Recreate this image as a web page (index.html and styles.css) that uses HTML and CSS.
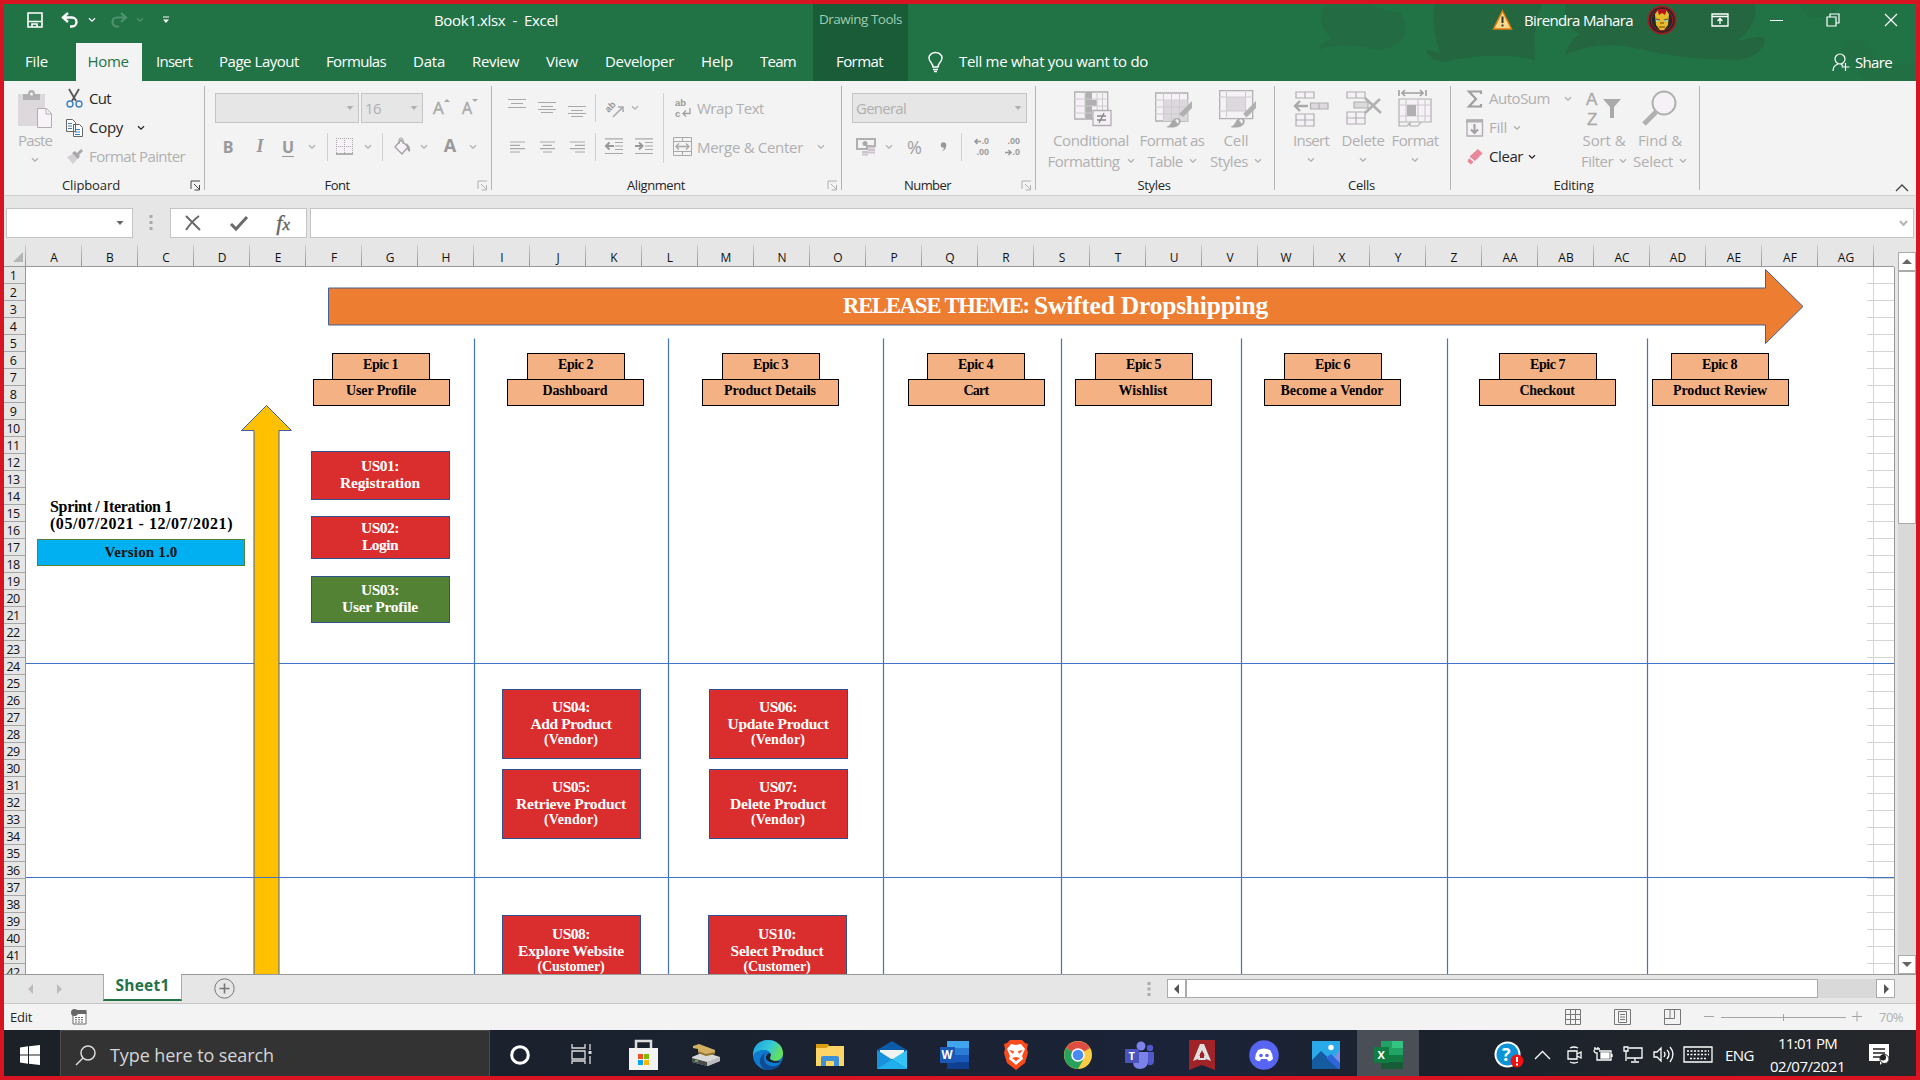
FILE: index.html
```html
<!DOCTYPE html>
<html lang="en">
<head>
<meta charset="utf-8">
<title>Book1.xlsx - Excel</title>
<link rel="stylesheet" href="styles.css">
</head>
<body>
<svg width="0" height="0" class="defs">
  <defs>
    <symbol id="chev" viewBox="0 0 8 6"><path d="M1 1.200l3 3 3-3" fill="none" stroke="currentColor" stroke-width="1.300"/></symbol>
    <symbol id="tri" viewBox="0 0 8 6"><path d="M.5 1h7L4 5z" fill="currentColor"/></symbol>
    <symbol id="launch" viewBox="0 0 11 11"><path d="M1 9V1h9M4 4l5 5M9.500 5v5h-5" fill="none" stroke="currentColor"/></symbol>
    <symbol id="brush" viewBox="0 0 28 28"><path d="M27 1v7l-9 9-4-3z" fill="#b0b0b0"/><path d="M1 27c6-1 5-9 11-9 4 0 5 4 2 7s-8 3-13 2z" fill="#a9a9a9"/><path d="M10 20c3-2 5 1 3 4z" fill="#f3f3f3"/></symbol>
  </defs>
</svg>
<div class="screen">
  <header class="head">
    <svg class="art" width="640" height="77" viewBox="1276 4 640 77"><g fill="#24663f"><path d="M1325 4h43q20 8 32 8 8 12 4 24-5 10-25 14-30-7-54-3l-6 4 2-7q8-2 10-6-16-14-6-34z" opacity=".6"/><path d="M1434 4h108q-9 20-7 56-40-10-92 2-15-3-17-13 8 3 14 4-8-25-6-49z"/><path d="M1565 4h190q4 20-18 37l20-4q8-1 8 4-4 16-28 19-60-1-97-11-40-10-75 6 4-14 14-21-16-10-14-30z"/><path d="M1842 50q0-14 18-10l25 24q20 4 31-4v21h-50z" opacity=".3"/><path d="M1800 4h40q-5 14-26 14-12-3-14-14z" opacity=".4"/></g></svg>
    <div class="titlerow">
      <svg class="g23" width="16" height="16" viewBox="0 0 16 16" fill="none" stroke="#fff" stroke-width="1.600"><path d="M1 1h14v14H1zM1 9.500h14M5 15v-3h5v3"/></svg>
      <svg class="g18" width="19" height="16" viewBox="0 0 19 16" fill="none" stroke="#fff" stroke-width="2.400"><path d="M7 1L2 5.500 7 10M2 5.500h9a4.500 4.500 0 0 1 0 9H9"/></svg>
      <svg class="g8 w" width="8" height="6"><use href="#chev"/></svg>
      <svg class="g13" width="19" height="16" viewBox="0 0 19 16" fill="none" stroke="#4f9270" stroke-width="2.200"><path d="M12 1l5 4.500L12 10M17 5.500H8a4.500 4.500 0 0 0 0 9h2"/></svg>
      <svg class="g8 dim" width="8" height="6"><use href="#chev"/></svg>
      <svg class="g18" width="8" height="8" viewBox="0 0 8 8"><path d="M1 1h6" stroke="#fff"/><path d="M1 3.500h6L4 7z" fill="#fff"/></svg>
      <div class="doc"><span data-w="124">Book1.xlsx &nbsp;-&nbsp; Excel</span></div>
      <div class="ctx"><span data-w="83">Drawing Tools</span></div>
      <div class="user">
        <svg width="19" height="20" viewBox="0 0 19 20"><path d="M9.500 1L18.500 19H.5z" fill="#fbd98a" stroke="#e07a10" stroke-width="1.500"/><path d="M9.500 6.500v6.500M9.500 14.500v2" stroke="#333" stroke-width="2"/></svg>
        <span class="g12" data-w="109">Birendra Mahara</span>
        <svg class="g14" width="30" height="30" viewBox="0 0 30 30"><circle cx="15" cy="15" r="14.500" fill="#a01c22"/><circle cx="15" cy="15" r="12.800" fill="#262626"/><circle cx="15" cy="15" r="10.800" fill="none" stroke="#a01c22"/><path d="M8 9l3-4h8l3 4-1 11-4 5h-4l-4-5z" fill="#e5bb2a"/><path d="M10 4h10l-2 6-3-2-3 2z" fill="#b4141c"/><path d="M9 15.500h4m4 0h4" stroke="#7fe3f5" stroke-width="1.500"/><path d="M13 18h4M9 14l4 1m8-1l-4 1M12 22h6" stroke="#7a3a10"/></svg>
        <svg class="g34" width="18" height="14" viewBox="0 0 18 14" fill="none" stroke="#fff" stroke-width="1.300"><path d="M1 1h16v12H1zM1 3.500h16M9 11V6M6.500 8L9 5.500 11.500 8"/></svg>
        <svg class="g41" width="14" height="14"><path d="M0 7.500h13" stroke="#fff"/></svg>
        <svg class="g42" width="14" height="14" viewBox="0 0 14 14" fill="none" stroke="#fff" stroke-width="1.200"><path d="M1 4h9v9H1zM4 4V1h9v9h-3"/></svg>
        <svg class="g44" width="14" height="14" viewBox="0 0 14 14" fill="none" stroke="#fff" stroke-width="1.200"><path d="M1 1l12 12M13 1L1 13"/></svg>
      </div>
    </div>
    <nav class="tabs">
      <span class="tab file"><b data-w="23">File</b></span><span class="tab active"><b data-w="41">Home</b></span>
      <span class="tab g14"><b data-w="36">Insert</b></span><span class="tab g27"><b data-w="80">Page Layout</b></span><span class="tab g27"><b data-w="60">Formulas</b></span><span class="tab g27"><b data-w="32">Data</b></span><span class="tab g27"><b data-w="47">Review</b></span><span class="tab g27"><b data-w="32">View</b></span><span class="tab g27"><b data-w="69">Developer</b></span><span class="tab g27"><b data-w="32">Help</b></span><span class="tab g27"><b data-w="36">Team</b></span>
      <span class="tab ctxtab"><b data-w="47">Format</b></span>
      <svg class="g20" width="15" height="20" viewBox="0 0 15 20" fill="none" stroke="#fff" stroke-width="1.400"><path d="M5 15c0-4-4-5-4-9a6.500 5.500 0 0 1 13 0c0 4-4 5-4 9zM5 17.500h5M6 19.500h3"/></svg>
      <span class="tab g16"><b data-w="189">Tell me what you want to do</b></span>
      <div class="share"><svg width="18" height="19" viewBox="0 0 18 19" fill="none" stroke="#fff" stroke-width="1.200"><circle cx="8" cy="6" r="5"/><path d="M1 18c0-4 2-6 5-7M9 11l2 2M13.500 10v8M9.500 14h8"/></svg><b class="g5" data-w="37">Share</b></div>
    </nav>
  </header>

  <section class="ribbon">
    <div class="group clip">
      <div class="body">
        <div class="big paste"><div class="ic"><svg width="34" height="38" viewBox="0 0 34 38"><path d="M0 4h27v32H0z" fill="#ddd8dc"/><path d="M5 10V4h5a3.500 4 0 0 1 7 0h5v6z" fill="#b0b0b0"/><circle cx="13.500" cy="4" r="1.500" fill="#f3f3f3"/><path d="M19.500 18.500h9l5 5v14h-14z" fill="#f7f3f8" stroke="#b0b0b0"/><path d="M28 18.500v5.500h5.500" fill="none" stroke="#b0b0b0"/></svg></div><span data-w="34">Paste</span><svg width="8" height="6"><use href="#chev"/></svg></div>
        <div class="list">
          <div class="on"><svg width="17" height="19" viewBox="0 0 17 19" fill="none"><path d="M3 0l7 12M13 0L6 12" stroke="#555" stroke-width="1.800"/><circle cx="4" cy="15" r="3" stroke="#3f7fbf" stroke-width="1.400"/><circle cx="13" cy="15" r="3" stroke="#3f7fbf" stroke-width="1.400"/></svg><span class="g6" data-w="22">Cut</span></div>
          <div class="on"><svg width="17" height="18" viewBox="0 0 17 18" fill="#fff" stroke="#666"><path d="M.5.500h6l3 3v9h-9zM7.500 5.500h6l3 3v9h-9z"/><path d="M2 4.500h4M2 7h4M2 9.500h4M9 10.500h5M9 13h5M9 15.500h5" stroke="#3f7fbf"/></svg><span class="g6" data-w="34">Copy</span><svg class="g14" width="8" height="6"><use href="#chev"/></svg></div>
          <div><svg width="17" height="15" viewBox="0 0 17 15"><path d="M1 8l6-3 5 4-5 6z" fill="#d5d0d5"/><path d="M6 4l3-2 5 5-2 3zM11 4l4-4 2 2-4 4z" fill="#a9a9a9"/></svg><span class="g6" data-w="96">Format Painter</span></div>
        </div>
      </div>
      <div class="label"><span data-w="58">Clipboard</span><svg class="on launch" width="11" height="11"><use href="#launch"/></svg></div>
    </div>
    <i class="sep"></i>
    <div class="group font">
      <div class="rows">
        <div class="row"><div class="combo g10 fam"><svg width="8" height="6"><use href="#tri"/></svg></div><div class="combo g2 size"><span data-w="16">16</span><svg width="8" height="6"><use href="#tri"/></svg></div><span class="aa g10">A<svg width="6" height="5" viewBox="0 0 6 5"><path d="M0 4l3-3 3 3z" fill="#a9a9a9"/></svg></span><span class="aa small g14">A<svg width="6" height="5" viewBox="0 0 6 5"><path d="M0 1l3 3 3-3z" fill="#a9a9a9"/></svg></span></div>
        <div class="row"><span class="f b g16">B</span><span class="f i g18">I</span><span class="f u g14">U</span><svg class="g13" width="8" height="6"><use href="#chev"/></svg><i class="ms g11"></i>
          <svg class="g8" width="17" height="17" viewBox="0 0 17 17"><path d="M0 0h17v17H0z" fill="#f7f1f8"/><path d="M.5 0v16M8.500 0v16M16.500 0v16M0 .5h17M0 8.500h17" stroke="#a9a9a9" stroke-dasharray="1 1"/><path d="M0 16h17" stroke="#999" stroke-width="1.500"/></svg><svg class="g11" width="8" height="6"><use href="#chev"/></svg><i class="ms g10"></i>
          <svg class="g11" width="18" height="17" viewBox="0 0 18 17"><path d="M7 2l7 7-6 7-7-7z" fill="#f7f1f8" stroke="#a0a0a0" stroke-width="1.300"/><path d="M5 6V2a2 2 0 0 1 4 0v4" fill="none" stroke="#a0a0a0"/><path d="M12 5q5 3 4 9-3-1-3-5z" fill="#a0a0a0"/></svg><svg class="g8" width="8" height="6"><use href="#chev"/></svg>
          <span class="f b big-a g15">A</span><svg class="g12" width="8" height="6"><use href="#chev"/></svg></div>
      </div>
      <div class="label"><span data-w="25">Font</span><svg class="launch" width="11" height="11"><use href="#launch"/></svg></div>
    </div>
    <i class="sep"></i>
    <div class="group align">
      <div class="body">
        <div class="rows alrows">
          <div class="row"><svg class="g16" width="18" height="20"><path d="M0 1.500h18M3 5.500h12M0 9.500h18" stroke="#a9a9a9" stroke-width="1.200"/></svg><svg class="g12" width="18" height="20"><path d="M0 4.500h18M3 8.500h12M0 11.500h18M3 14.500h12" stroke="#a9a9a9" stroke-width="1.200"/></svg><svg class="g12" width="18" height="20"><path d="M0 8.500h18M3 12.500h12M0 15.500h18M3 18.500h12" stroke="#a9a9a9" stroke-width="1.200"/></svg><i class="ms g9"></i>
            <svg class="g9" width="20" height="20" viewBox="0 0 20 20"><text class="tiny" x="1" y="11" transform="rotate(-45 7 10)">ab</text><path d="M8 19L18 9M18 14V9h-5" fill="none" stroke="#a9a9a9" stroke-width="1.500"/></svg><svg class="g6" width="8" height="6"><use href="#chev"/></svg></div>
          <div class="row"><svg class="g18" width="15" height="12"><path d="M0 1h15M0 4.300h10M0 7.600h15M0 11h10" stroke="#a9a9a9" stroke-width="1.200"/></svg><svg class="g15" width="15" height="12"><path d="M0 1h15M3 4.300h9M0 7.600h15M3 11h9" stroke="#a9a9a9" stroke-width="1.200"/></svg><svg class="g15" width="15" height="12"><path d="M0 1h15M5 4.300h10M0 7.600h15M5 11h10" stroke="#a9a9a9" stroke-width="1.200"/></svg><i class="ms g10"></i>
            <svg class="g9" width="18" height="17" fill="none"><path d="M0 .8h18M10 4.500h8M10 8h8M10 11.500h8M0 15.500h18" stroke="#a9a9a9" stroke-width="1.200"/><path d="M1 8h8M4.500 4.500L1 8l3.500 3.500" stroke="#999" stroke-width="2"/></svg>
            <svg class="g12" width="18" height="17" fill="none"><path d="M0 .8h18M10 4.500h8M10 8h8M10 11.500h8M0 15.500h18" stroke="#a9a9a9" stroke-width="1.200"/><path d="M0 8h7M4 4.500L7.500 8 4 11.500" stroke="#999" stroke-width="2"/></svg></div>
        </div>
        <i class="ms tall"></i>
        <div class="rows">
          <div class="row"><svg class="g11" width="16" height="22" viewBox="0 0 16 22"><text class="tiny" x="0" y="9">ab</text><text class="tiny" x="0" y="20">c</text><path d="M15 11v5.500H8M11 13.500l-3 3 3 3" fill="none" stroke="#a0a0a0" stroke-width="1.300"/></svg><span class="g6" data-w="67">Wrap Text</span></div>
          <div class="row"><svg class="g9" width="19" height="19" viewBox="0 0 19 19" fill="none" stroke="#a9a9a9"><path d="M.5.500h18v18H.5zM.5 4.500h18M.5 14.500h18M9.500 0v4M9.500 15v4"/><path d="M3 9.500h13M6 6.500l-3 3 3 3M13 6.500l3 3-3 3" stroke-width="1.400"/></svg><span class="g5" data-w="106">Merge &amp; Center</span><svg class="g14" width="8" height="6"><use href="#chev"/></svg></div>
        </div>
      </div>
      <div class="label shift"><span data-w="58">Alignment</span><svg class="launch" width="11" height="11"><use href="#launch"/></svg></div>
    </div>
    <i class="sep"></i>
    <div class="group number">
      <div class="rows">
        <div class="row"><div class="combo g10 gen"><span data-w="50">General</span><svg width="8" height="6"><use href="#tri"/></svg></div></div>
        <div class="row"><svg class="g14" width="20" height="20" viewBox="0 0 20 20"><path d="M1 2h18v7H11v3H1z" fill="none" stroke="#b0b0b0" stroke-width="2"/><circle cx="9" cy="6.500" r="2.500" fill="#a9a9a9"/><path d="M12 10.500h7M12 13h7M12 15.500h7M6 15h6M6 17.500h6" stroke="#ccc4cc" stroke-width="1.800"/></svg><svg class="g9" width="8" height="6"><use href="#chev"/></svg><span class="pct g14">%</span><svg class="g16" width="9" height="12" viewBox="0 0 9 12"><circle cx="4.500" cy="4" r="2.700" fill="#999"/><path d="M7.200 4q0 5-4.500 6.500 3-2.500 2-5z" fill="#999"/></svg><i class="ms g13"></i>
          <span class="dec g10"><span><svg width="7" height="7" viewBox="0 0 7 7"><path d="M7 3.500H1M3.500 1L1 3.500 3.500 6" fill="none" stroke="#999" stroke-width="1.600"/></svg>.0</span><span>.00</span></span><span class="dec g14"><span>.00</span><span><svg width="7" height="7" viewBox="0 0 7 7"><path d="M0 3.500h6M3.500 1L6 3.500 3.500 6" fill="none" stroke="#999" stroke-width="1.600"/></svg>.0</span></span></div>
      </div>
      <div class="label"><span data-w="47">Number</span><svg class="launch" width="11" height="11"><use href="#launch"/></svg></div>
    </div>
    <i class="sep"></i>
    <div class="group styles">
      <div class="body">
        <div class="big cond"><div class="ic"><svg width="38" height="36" viewBox="0 0 38 36"><path d="M.7 2h33v27H.7z" fill="#f6f1f7" stroke="#b0b0b0" stroke-width="1.300"/><path d="M11 2h7v27h-7zM11 10h12v6H11z" fill="#b0b0b0"/><path d="M0 9h34M0 16h34M0 23h34M11 2v27M23 2v27M28.500 2v27" stroke="#ccc"/><path d="M19 20.500h18v15H19z" fill="#f6f1f7" stroke="#b0b0b0" stroke-width="1.300"/><path d="M23 26h9M23 30h9M30 23l-5 10" stroke="#888" stroke-width="1.400"/></svg></div><span data-w="76">Conditional</span><span><b data-w="72">Formatting</b><svg class="g7" width="8" height="6"><use href="#chev"/></svg></span></div>
        <div class="big fmt"><div class="ic"><svg width="38" height="38" viewBox="0 0 38 38"><path d="M.7 3h32v28H.7z" fill="#f6f1f7" stroke="#b0b0b0" stroke-width="1.300"/><path d="M8.500 10.500h24V31h-24z" fill="#ddd8dd"/><path d="M0 10h33M0 17h33M0 24h33M8.500 3v28M16.500 3v28M24.500 3v28" stroke="#ccc"/><use href="#brush" x="10" y="10" width="28" height="28"/></svg></div><span data-w="65">Format as</span><span><b data-w="35">Table</b><svg class="g6" width="8" height="6"><use href="#chev"/></svg></span></div>
        <div class="big cell"><div class="ic"><svg width="38" height="38" viewBox="0 0 38 38"><path d="M.7.700h33v28H.7z" fill="#f6f1f7" stroke="#b0b0b0" stroke-width="1.300"/><path d="M8 7h19v14H8z" fill="#ddd8dd"/><path d="M0 7h34M0 21h34M7.500 0v29M26.500 0v29" stroke="#ccc"/><use href="#brush" x="10" y="10" width="28" height="28"/></svg></div><span data-w="25">Cell</span><span><b data-w="38">Styles</b><svg class="g6" width="8" height="6"><use href="#chev"/></svg></span></div>
      </div>
      <div class="label"><span data-w="33">Styles</span></div>
    </div>
    <i class="sep"></i>
    <div class="group cells">
      <div class="body">
        <div class="big"><div class="ic"><svg width="36" height="36" viewBox="0 0 36 36" fill="#f6f1f7" stroke="#b0b0b0" stroke-width="1.200"><path d="M3 2h18v6H3zM12 2v6M3 24h18v12H3zM12 24v12M3 30h18"/><path d="M17.500 13h17.500v6H17.500zM26 13v6" fill="#ddd8dd"/><path d="M15 16H2M7 11l-5 5 5 5" fill="none" stroke="#a9a9a9" stroke-width="2.400"/></svg></div><span data-w="36">Insert</span><svg width="8" height="6"><use href="#chev"/></svg></div>
        <div class="big"><div class="ic"><svg width="36" height="36" viewBox="0 0 36 36" fill="#f6f1f7" stroke="#b0b0b0" stroke-width="1.200"><path d="M2 2h18v6H2zM11 2v6M2 22h18v12H2zM11 22v12M2 28h18"/><path d="M9 12h14v6H9z" fill="#ddd8dd"/><path d="M20 8l16 15M35 9L20 23" fill="none" stroke="#b0b0b0" stroke-width="2.600"/></svg></div><span data-w="43">Delete</span><svg width="8" height="6"><use href="#chev"/></svg></div>
        <div class="big"><div class="ic"><svg width="34" height="38" viewBox="0 0 34 38" fill="#f6f1f7" stroke="#b0b0b0" stroke-width="1.200"><path d="M1 0v6M28 0v6M4 3h21M7 0L4 3l3 3M22 0l3 3-3 3" fill="none" stroke="#a0a0a0" stroke-width="1.600"/><path d="M1 9h32v23H1z"/><path d="M1 15h32M1 26h32M8 9v23M20 9v23M27 9v23" stroke="#ccc"/><path d="M9 15h9v11H9z" fill="#b0b0b0" stroke="none"/><path d="M1 32v4h8l3-3v3h8l3-4" fill="none"/></svg></div><span data-w="47">Format</span><svg width="8" height="6"><use href="#chev"/></svg></div>
      </div>
      <div class="label"><span data-w="27">Cells</span></div>
    </div>
    <i class="sep"></i>
    <div class="group edit">
      <div class="body">
        <div class="list">
          <div><svg width="18" height="18" viewBox="0 0 18 18"><path d="M15 4V1.500H3L10 9l-7 7.500h12V14" fill="none" stroke="#a0a0a0" stroke-width="2.200"/></svg><span class="g5" data-w="61">AutoSum</span><svg class="g14" width="8" height="6"><use href="#chev"/></svg></div>
          <div><svg width="18" height="18" viewBox="0 0 18 18"><path d="M1 1h15.500v16H1z" fill="#f6f1f7" stroke="#b0b0b0" stroke-width="1.400"/><path d="M0 2h17" stroke="#b0b0b0" stroke-width="3"/><path d="M8.500 5v9M5 10.500L8.500 14l3.500-3.500" fill="none" stroke="#a0a0a0" stroke-width="2"/></svg><span class="g5" data-w="18">Fill</span><svg class="g6" width="8" height="6"><use href="#chev"/></svg></div>
          <div class="on"><svg width="18" height="18" viewBox="0 0 18 18"><path d="M12 1.500l4 4-7 7-5-4z" fill="#e8869a" stroke="#e8869a" stroke-linejoin="round"/><path d="M3 10l4.500 4-2.500 2.500-3.500-3z" fill="#e8869a"/></svg><span class="g5" data-w="34">Clear</span><svg class="g5" width="8" height="6"><use href="#chev"/></svg></div>
        </div>
        <div class="big"><div class="ic"><svg width="36" height="38" viewBox="0 0 36 38"><text class="az" x="0" y="15">A</text><text class="az" x="1" y="35">Z</text><path d="M17 9h18l-7 8v11h-4V17z" fill="#a9a9a9"/></svg></div><span data-w="43">Sort &amp;</span><span><b data-w="32">Filter</b><svg class="g6" width="8" height="6"><use href="#chev"/></svg></span></div>
        <div class="big"><div class="ic"><svg width="36" height="36" viewBox="0 0 36 36"><path d="M2 34l12-12" stroke="#b0b0b0" stroke-width="5"/><circle cx="22" cy="13" r="11.500" fill="#f6f1f7" stroke="#b0b0b0" stroke-width="2"/></svg></div><span data-w="44">Find &amp;</span><span><b data-w="40">Select</b><svg class="g6" width="8" height="6"><use href="#chev"/></svg></span></div>
      </div>
      <div class="label"><span data-w="40">Editing</span></div>
    </div>
    <i class="sep"></i>
    <svg class="collapse" width="14" height="9" viewBox="0 0 14 9"><path d="M1 8l6-6 6 6" fill="none" stroke="#444" stroke-width="1.300"/></svg>
  </section>

  <section class="fbar">
    <div class="namebox"><svg width="8" height="6"><use href="#tri"/></svg></div>
    <svg class="dots" width="4" height="18"><path d="M2 1v3M2 7v3M2 13v3" stroke="#aaa" stroke-width="3"/></svg>
    <div class="fbtns">
      <svg width="16" height="16" viewBox="0 0 16 16"><path d="M1 1l14 14M14 1Q7 6 1 15" stroke="#6a6a6a" stroke-width="2" fill="none"/></svg>
      <svg width="18" height="15" viewBox="0 0 18 15"><path d="M1 8l5 5L17 1" stroke="#6a6a6a" stroke-width="3" fill="none"/></svg>
      <span class="fx">f<small>x</small></span>
    </div>
    <div class="finput"><svg width="9" height="7" viewBox="0 0 9 7"><path d="M1 1l3.500 4L8 1" fill="none" stroke="#b5b5b5" stroke-width="2"/></svg></div>
  </section>

  <section class="sheet">
    <div class="colheads" id="cols"><span class="corner"><svg width="10" height="10"><path d="M10 0v10H0z" fill="#b5b5b5"/></svg></span></div>
    <div class="gridrow">
      <div class="rowheads" id="rows"></div>
      <div class="canvas" id="canvas">
        <svg width="1868" height="707" viewBox="26 267 1868 707" id="lines"></svg>
      </div>
    </div>
    <div class="vscroll"><span class="btn"><svg width="10" height="7"><path d="M0 6h10L5 1z" fill="#666"/></svg></span><span class="thumb"></span><span class="track"></span><span class="btn"><svg width="10" height="7"><path d="M0 1h10L5 6z" fill="#666"/></svg></span></div>
  </section>

  <section class="sheetbar">
    <svg class="g24" width="5" height="10"><path d="M5 0v10L0 5z" fill="#bcbcbc"/></svg>
    <svg class="g24" width="5" height="10"><path d="M0 0v10l5-5z" fill="#bcbcbc"/></svg>
    <div class="stab"><span data-w="54">Sheet1</span></div>
    <svg class="g32" width="21" height="21" viewBox="0 0 21 21" fill="none" stroke="#777"><circle cx="10.500" cy="10.500" r="9.700"/><path d="M10.500 5.500v10M5.500 10.500h10" stroke-width="1.600"/></svg>
    <div class="hs"><svg width="4" height="16"><path d="M2 1v3M2 6.500v3M2 12v3" stroke="#aaa" stroke-width="3"/></svg>
      <div class="hscroll"><span class="btn"><svg width="6" height="10"><path d="M5 0v10L0 5z" fill="#555"/></svg></span><span class="hthumb"></span><span class="htrack"></span><span class="btn"><svg width="6" height="10"><path d="M1 0v10l5-5z" fill="#555"/></svg></span></div>
    </div>
  </section>
  <section class="status">
    <span class="g6" data-w="22">Edit</span>
    <svg class="g39" width="16" height="16" viewBox="0 0 16 16"><path d="M2 3h13v12H2z" fill="#fff" stroke="#666"/><path d="M5 1h10.500v4H5z" fill="#666"/><circle cx="3.500" cy="3.500" r="3.500" fill="#666"/><path d="M4 8.500h9M4 10.800h9M4 13h9" stroke="#666" stroke-dasharray="2 1"/></svg>
    <div class="views">
      <svg width="17" height="16" fill="none" stroke="#777"><path d="M.5.500h15v15H.5zM.5 5.500h15M.5 10.500h15M5.500 0v16M10.500 0v16"/></svg>
      <svg class="g32" width="17" height="16" fill="none" stroke="#777"><path d="M.5.500h16v15H.5zM4.500 2.500h8v11h-8zM6 5.500h5M6 8h5M6 10.500h5"/></svg>
      <svg class="g33" width="17" height="16" fill="none" stroke="#777"><path d="M.5.500h16v15H.5zM.5 9.500h10V.5M6 .5v9"/></svg>
      <svg class="g23" width="160" height="16" fill="none" stroke="#a5a5a5"><path d="M0 7.500h10M17 8.500h125M79.500 5v7M148 7.500h10M153 2.500v10"/></svg>
      <span class="g15 pc" data-w="24">70%</span>
    </div>
  </section>

  <footer class="taskbar">
    <div class="start"><svg width="20" height="20" fill="#fff"><path d="M0 2.500l8-1.200v8.200H0zM9 1.200L20 0v9.500H9zM0 10.500h8v8.200l-8-1.200zM9 10.500h11V20L9 18.800z"/></svg></div>
    <div class="search"><svg width="21" height="21" fill="none" stroke="#ddd" stroke-width="1.500"><circle cx="13" cy="8" r="7"/><path d="M8 13l-7 7"/></svg><span class="g14" data-w="164">Type here to search</span></div>
    <div class="apps">
      <span><svg width="20" height="20"><circle cx="10" cy="10" r="8.300" fill="none" stroke="#fff" stroke-width="3"/></svg></span>
      <span><svg width="22" height="21" fill="none" stroke="#ddd" stroke-width="1.300"><path d="M1 0v4h13V0M1 7h13v8H1zM1 20v-3h13v3M19 0v6M19 12v8"/><path d="M19 7v3" stroke-width="3"/></svg></span>
      <span><svg width="30" height="30"><path d="M7 10V1h15v9" fill="none" stroke="#ddd" stroke-width="2.500"/><path d="M0 8h29v22H0z" fill="#f3f3f3"/><path d="M9 14h5v5H9z" fill="#f25022"/><path d="M15 14h5v5h-5z" fill="#7fba00"/><path d="M9 20h5v5H9z" fill="#00a4ef"/><path d="M15 20h5v5h-5z" fill="#ffb900"/></svg></span>
      <span><svg width="28" height="22" viewBox="0 0 28 22"><path d="M0 13l12-5 16 5v4l-12 5L0 18z" fill="#d8d8d8"/><path d="M0 14l15 4v4L0 18z" fill="#4b4b4b"/><path d="M15 18l13-5v4l-13 5z" fill="#bbb"/><path d="M1 2l6-2 16 6v4l-9 2-8-3V5L1 4z" fill="#d2b062"/><path d="M6 7l8 3 9-2v2l-9 2-8-3z" fill="#927535"/><path d="M3 17h3" stroke="#4fd05a" stroke-width="1.500"/></svg></span>
      <span><svg width="30" height="30" viewBox="0 0 30 30"><defs><linearGradient id="eg" x1="0" x2="1" y1="0" y2=".4"><stop stop-color="#199fe0"/><stop offset=".6" stop-color="#35c8d8"/><stop offset="1" stop-color="#65e15a"/></linearGradient></defs><circle cx="15" cy="15" r="15" fill="#0f7bd0"/><path d="M0 13C1 5 7 0 15 0c9 0 15 6 15 13 0 6-5 8-9 8s-5-2-4-4 1-7-6-7C5 10 1 12 0 17z" fill="url(#eg)"/><path d="M11 16c-1 9 8 14 17 7-3 6-9 7-13 7C8 30 5 22 8 17s7-5 9-4c-4-1-6 1-6 3z" fill="#104b95"/><path d="M17 13c2 2 0 4 0 5s2 4 12 3c-6 4-18 1-16-5 1-2 3-3 4-3z" fill="#1b2232"/></svg></span>
      <span><svg width="28" height="24"><path d="M0 1h12l2 3h14v19H0z" fill="#dd9c10"/><path d="M0 5h10l3-2h15v20H0z" fill="#fcd566"/><path d="M5 23v-8q0-2 2-2h14q2 0 2 2v8h-5v-5h-8v5z" fill="#3c91d6"/></svg></span>
      <span><svg width="30" height="28"><path d="M0 9L15 0l15 9v10H0z" fill="#0a5ba8"/><path d="M3 9h24v9H3z" fill="#f2f2f2"/><path d="M0 9l30 19H0z" fill="#1792dc"/><path d="M30 9v19L15 18.500z" fill="#33c4f5"/><path d="M0 28l15-9.500L30 28z" fill="#22aeea"/></svg></span>
      <span><svg width="29" height="28"><path d="M7 0h22v7H7z" fill="#41a5ee"/><path d="M7 7h22v7H7z" fill="#2b7cd3"/><path d="M7 14h22v7H7z" fill="#185abd"/><path d="M7 21h22v7H7z" fill="#103f91"/><path d="M0 6h15v16H0z" fill="#1b57b5"/><text x="1.500" y="18" font-size="11.500" font-weight="bold" fill="#fff">W</text></svg></span>
      <span><svg width="26" height="30"><path d="M7 0h12l3 3 3 1-1 5 1 4-3 10-9 7-9-7L1 13l1-4-1-5 3-1z" fill="#fb4a1c"/><path d="M8 4l5 1 5-1 4 5-3 7 1 3-7 6-7-6 1-3-3-7z" fill="#fff"/><path d="M6 10l5 1-1 3zM20 10l-5 1 1 3zM9 18l4-1 4 1-4 3z" fill="#fb4a1c"/></svg></span>
      <span><svg width="28" height="28" viewBox="0 0 28 28"><circle cx="14" cy="14" r="14" fill="#fccc44"/><path d="M14 14L2 7a14 14 0 0 1 24 0z" fill="#dc4e41"/><path d="M2 7a14 14 0 0 0 12 21l6-10.500-6-3.500z" fill="#26a25d"/><circle cx="14" cy="14" r="6.800" fill="#fff"/><circle cx="14" cy="14" r="5.300" fill="#4a8af4"/></svg></span>
      <span><svg width="30" height="28"><circle cx="16" cy="5" r="4.500" fill="#7b83eb"/><circle cx="25" cy="7" r="3.200" fill="#5059c9"/><path d="M20 11h9v9q0 5-6 4z" fill="#5059c9"/><path d="M9 11h14v10q-1 7-8 7t-7-7z" fill="#7b83eb"/><path d="M0 8h14v14H0z" fill="#4b53bc"/><text x="3.500" y="19" font-size="11" font-weight="bold" fill="#fff">T</text></svg></span>
      <span><svg width="26" height="30"><path d="M0 0h26v30l-13-5-13 5z" fill="#a02328"/><path d="M11 4h4l7 17-5-2-4-9-4 9-5 2zM10 16h6l1 4h-8z" fill="#e0e0e0"/><path d="M11 13h4v5h-4z" fill="#a02328"/></svg></span>
      <span><svg width="30" height="30"><circle cx="15" cy="15" r="14.800" fill="#5865f2"/><path d="M9 10q6-3 12 0 3 4 3 9-3 3-5 2l-1-2h-6l-1 2q-2 1-5-2 0-5 3-9z" fill="#fff"/><circle cx="12" cy="15.500" r="1.800" fill="#5865f2"/><circle cx="18" cy="15.500" r="1.800" fill="#5865f2"/></svg></span>
      <span><svg width="28" height="28"><path d="M0 0h28v28H0z" fill="#2aa9e8"/><path d="M28 8v20H14z" fill="#7e8fe0"/><circle cx="19" cy="6.500" r="2.700" fill="#fff"/><path d="M0 19l9-9 19 18H0z" fill="#155b9f"/><path d="M14 17l5-4 9 9v6h-2z" fill="#2c66d8"/></svg></span>
      <span class="cur"><svg width="29" height="28"><path d="M7 0h22v28H7z" fill="#21a366"/><path d="M18 0h11v7H18z" fill="#33c481"/><path d="M7 14h11v7H7z" fill="#107c41"/><path d="M18 14h11v7H18z" fill="#107c41"/><path d="M7 21h22v7H7z" fill="#185c37"/><path d="M0 6h15v16H0z" fill="#107c41"/><text x="3.500" y="18" font-size="11" font-weight="bold" fill="#fff">X</text></svg></span>
    </div>
    <div class="tray">
      <svg width="30" height="28"><circle cx="13.500" cy="13.500" r="13" fill="#fff"/><circle cx="13.500" cy="13.500" r="11" fill="#0c93d8"/><text x="8" y="20" font-size="18" font-weight="bold" fill="#fff">?</text><circle cx="23" cy="20" r="6.500" fill="#f01010"/><path d="M23 16v5M23 22.500v2" stroke="#fff" stroke-width="2"/></svg>
      <svg class="g10" width="17" height="10" fill="none" stroke="#fff" stroke-width="1.300"><path d="M1 9l7.500-7.500L16 9"/></svg>
      <svg class="g16" width="15" height="18" fill="none" stroke="#fff" stroke-width="1.300"><path d="M3 2q4-2 8 0M3 16q4 2 8 0M1 5h9v8H1zM10 8l4-2v6l-4-2"/></svg>
      <svg class="g11" width="20" height="15" fill="none" stroke="#fff" stroke-width="1.300"><path d="M6 4h12v9H6M19 7v3M1 2h6M2 0v2M5 0v2M1 3q0 3 3 3v7h3"/><path d="M8 6h8v5H8z" fill="#fff"/></svg>
      <svg class="g10" width="20" height="17" fill="none" stroke="#fff" stroke-width="1.300"><path d="M6 2h13v10H4M1 1h4v4H1zM3 5v10M12 12v3M8 16h8"/></svg>
      <svg class="g10" width="21" height="17" fill="none" stroke="#fff" stroke-width="1.300"><path d="M1 6h3l4-4v13l-4-4H1zM11 6q2 2 0 5M14 4q4 4 0 9M17 1q6 7 0 15"/></svg>
      <svg class="g9" width="30" height="17" fill="none" stroke="#fff" stroke-width="1.300"><path d="M1 1h28v15H1z"/><path d="M4 5h22M4 8.500h22M7 12.500h16" stroke-dasharray="2 1.500"/></svg>
      <span class="eng" data-w="29">ENG</span>
      <div class="clock"><span data-w="59">11:01 PM</span><span data-w="75">02/07/2021</span></div>
      <svg class="g23" width="21" height="21"><path d="M0 0h20v17h-5l-4 4v-4H0z" fill="#fff"/><path d="M4 5h12M4 9h12M4 13h7" stroke="#222" stroke-width="1.300"/><circle cx="15.500" cy="15" r="4.500" fill="#fff" stroke="#222"/><circle cx="14" cy="13.500" r="3" fill="#222"/></svg>
    </div>
  </footer>
</div>
<script src="script.js"></script>
</body>
</html>
```
FILE: styles.css
```css
*{box-sizing:border-box}
body{margin:0;width:1920px;height:1080px;overflow:hidden;font-family:"Open Sans","Noto Sans",sans-serif;font-size:15px;color:#262626}
.defs{position:absolute}
svg{flex:none;display:block;overflow:visible}
b,i{font-weight:inherit;font-style:inherit}
[data-w]{display:inline-block;white-space:nowrap}
.screen{width:1920px;height:1080px;border:4px solid #d81322;display:flex;flex-direction:column;background:#e6e6e6}

.g2{margin-left:2px}.g5{margin-left:5px}.g6{margin-left:6px}.g7{margin-left:7px}.g8{margin-left:8px}.g9{margin-left:9px}
.g10{margin-left:10px}.g11{margin-left:11px}.g12{margin-left:12px}.g13{margin-left:13px}.g14{margin-left:14px}.g15{margin-left:15px}
.g16{margin-left:16px}.g18{margin-left:18px}.g20{margin-left:20px}.g23{margin-left:23px}.g24{margin-left:24px}.g27{margin-left:27px}
.g32{margin-left:32px}.g33{margin-left:33px}.g34{margin-left:34px}.g39{margin-left:39px}.g41{margin-left:41px}.g42{margin-left:42px}.g44{margin-left:44px}

/* title bar and tabs */
.head{height:77px;flex:none;background:#217346;color:#fff;position:relative}
.art{position:absolute;right:0;top:0}
.titlerow{height:39px;display:flex;align-items:center;position:relative;padding-bottom:7px}
.w{color:#fff}.dim{color:#4f9270}
.doc{flex:1;text-align:center;padding-left:9px;line-height:20px;margin-top:-1px}
.ctx{width:95px;height:39px;background:#1a5c38;color:#9fcdb3;font-size:13.500px;text-align:center;line-height:31px;align-self:flex-start}
.user{width:1008px;display:flex;align-items:center;padding-left:585px}
.tabs{height:38px;display:flex;align-items:center;position:relative}
.tab{line-height:36px;height:38px}
.file{width:72px;padding-left:21px}
.active{width:66px;background:#f3f3f3;color:#217346;text-align:center;padding-right:2px}
.ctxtab{width:95px;margin-left:17px;background:#1a5c38;text-align:center;padding-right:2px}
.share{margin-left:auto;margin-right:24px;display:flex;align-items:center}

/* ribbon */
.ribbon{height:115px;flex:none;background:#f3f3f3;border-bottom:1px solid #cfcfcf;display:flex;color:#b0b0b0;position:relative}
.sep{width:1px;background:#b4b4b4;margin:5px 0}
.group{display:flex;flex-direction:column;height:114px}
.body{display:flex;height:93px}
.clip{width:200px}.font{width:286px}.align{width:349px}.number{width:193px}.styles{width:238px}.cells{width:175px}.edit{width:248px}
.on{color:#262626}
.label{height:21px;color:#262626;font-size:13px;line-height:23px;display:flex;justify-content:center;position:relative;padding-right:26px}
.font .label{padding-right:22px}.align .label{padding-right:21px}.number .label{padding-right:22px}.styles .label{padding-right:2px}.cells .label{padding-right:2px}.edit .label{padding-right:3px}
.launch{position:absolute;right:3px;top:6px;color:#b0b0b0}
.launch.on{color:#444}
.big{display:flex;flex-direction:column;align-items:center;line-height:20px;padding-top:8px;width:52px}
.big .ic{height:41px;padding-top:1px;margin-bottom:0}
.big>span:last-child{margin-top:1px}
.styles .ic{padding-left:4px}
.big span:has(b){display:flex;align-items:center}
.big>svg{margin-top:7px}
.paste{width:62px}
.cond{width:82px;margin-left:14px}.fmt{width:80px}.cell{width:48px}
.cells .body{padding-left:10px}
.edit .big{width:56px}
.list{padding-top:3px;width:130px;line-height:18px}
.list span{margin-top:-2px}
.edit .list{width:125px;padding-left:15px}
.list>div{height:29px;display:flex;align-items:center}
.rows{padding-top:7px;height:93px}
.row{height:39px;display:flex;align-items:center}
.alrows{width:171px}
.combo{height:30px;border:1px solid #c4c4c4;background:#e6e6e6;display:flex;align-items:center;justify-content:space-between;padding:0 3px}
.combo svg{margin-left:auto;margin-right:1px}
.fam{width:144px}.size{width:62px}.gen{width:175px}
.aa{display:flex;font-size:17px;width:15px;line-height:20px;color:#a9a9a9;-webkit-text-stroke:.4px #a9a9a9}
.aa.small{font-size:16px}
.f{width:14px;text-align:center;color:#999;font-size:16px}
.f.b{font-weight:700}
.f.i{font:italic bold 18px "Liberation Serif",serif}
.f.u{font-weight:700;text-decoration:underline;text-underline-offset:3px}
.f.big-a{margin-top:-4px;font-size:18px}
.ms{width:1px;height:28px;background:#d0d0d0}
.tall{height:70px;margin-top:12px}
.tiny{font:bold 9.500px "Liberation Sans",sans-serif;fill:#999}
.az{font:17px "Liberation Sans",sans-serif;fill:#a9a9a9;stroke:#a9a9a9;stroke-width:.3}
.pct{width:16px;font-size:18px;color:#a0a0a0}
.dec{width:17px;display:flex;flex-direction:column;font:bold 9px/11px "Liberation Sans",sans-serif;color:#999}
.dec span{display:flex;justify-content:flex-end;align-items:center}
.collapse{margin:102px 7px 0 auto}

/* formula bar */
.fbar{height:49px;flex:none;display:flex;align-items:center;padding:5px 2px 0 2px}
.fbar>div{height:30px;border:1px solid #c4c4c4;background:#fff;display:flex;align-items:center}
.namebox{width:127px;justify-content:flex-end;padding-right:8px;color:#666}
.dots{margin:0 17px 0 16px}
.fbtns{width:137px;justify-content:space-between;padding:0 16px 0 14px}
.fx{font:italic 22px "Liberation Serif",serif;color:#666;-webkit-text-stroke:.4px #666}
.fx small{font-size:17px}
.finput{flex:1;margin-left:3px;justify-content:flex-end;padding-right:5px}

/* sheet */
.sheet{height:729px;flex:none;display:grid;grid-template-columns:1891px 21px;grid-template-rows:22px 707px}
.colheads{display:flex;height:22px;border-bottom:1px solid #999;overflow:hidden;font-size:12px;line-height:25px;color:#111;width:1890px}
.colheads span{flex:none;width:56px;padding-left:1px;text-align:center;border-right:1px solid;border-image:linear-gradient(#d0d0d0,#8f8f8f) 1}
.colheads .corner{width:22px;padding:7px 0 0 9px}
.colheads span:last-child{border:0}
.gridrow{display:flex;grid-row:2}
.rowheads{width:22px;border-right:1px solid #999;overflow:hidden;height:707px;font-size:12.500px;color:#111}
.rowheads span{display:block;height:17px;line-height:17px;border-bottom:1px solid #a6a6a6;text-align:center;letter-spacing:-.6px;padding-right:3px}
.canvas{width:1869px;height:707px;background:#fff;border-right:1px solid #999;position:relative;overflow:hidden;font-family:"Liberation Serif",serif;font-weight:700}
.shape{position:absolute;display:flex;flex-direction:column;align-items:center;justify-content:center}
.epic{background:#f4b183;border:1px solid #000;color:#000;font-size:14px;line-height:14px;padding-bottom:3px;padding-right:1px}
.story{background:#da2d2d;border:1px solid #2f528f;color:#fff;font-size:15.500px;line-height:17px;padding-bottom:3px;padding-right:1px}
.story .s{font-size:14px;line-height:15px}
.done{background:#548235}
.version{background:#00b0f0;border:1px solid #548235;color:#111;font-size:15px}
.sprint{color:#000;font-size:16px;line-height:17px;align-items:flex-start}
.theme{color:#fff;font-size:25.500px;padding-bottom:2px}
.caps{font-size:22.500px}
.vscroll{grid-column:2;grid-row:1/3;display:flex;flex-direction:column;margin:7px 0 0 3px;height:722px}
.btn{background:#fff;border:1px solid #ababab;display:flex;align-items:center;justify-content:center}
.vscroll .btn{height:19px}
.thumb{height:253px;background:#fff;border:1px solid #ababab}
.track{flex:1;background:#d9d9d9}

/* sheet tabs, status */
.sheetbar{height:30px;flex:none;border-top:1px solid #999;border-bottom:1px solid #c6c6c6;display:flex;align-items:center;padding-bottom:1px}
.stab{margin-left:41px;width:79px;height:27px;margin-top:-3px;background:#fff;border:1px solid #aaa;border-top:0;border-bottom:2px solid #217346;color:#217346;font-weight:700;font-size:15.500px;line-height:23px;text-align:center}
.hs{margin-left:auto;display:flex;align-items:center;margin-right:21px}
.hscroll{display:flex;width:728px;height:19px;margin-left:16px}
.hscroll .btn{width:19px}
.hthumb{width:632px;background:#fff;border:1px solid #ababab}
.htrack{flex:1;background:#d9d9d9}
.status{height:26px;flex:none;background:#f3f3f3;display:flex;align-items:center;font-size:13px}
.views{margin-left:auto;display:flex;align-items:center;margin-right:13px}
.pc{color:#b0b0b0}

/* taskbar */
.taskbar{height:46px;flex:none;display:flex;align-items:center;background:linear-gradient(90deg,#1c2127,#1a2230 38%,#1b2339 62%,#1b222c 75%,#26282b);color:#fff}
.start{width:56px;padding-left:16px;padding-top:3px}
.search{width:430px;height:46px;background:#333;border:1px solid #4c4c4c;border-bottom:0;display:flex;align-items:center;padding:3px 0 0 14px;font-size:18px;color:#d5d5d5}
.apps{display:flex;margin-left:-1px}
.apps>span{width:62px;height:46px;display:flex;align-items:center;justify-content:center;padding-top:3px}
.apps .cur{background:#4a4e57}
.tray{display:flex;align-items:center;margin-left:75px;font-size:15px;padding-top:3px}
.eng{margin-left:12px}
.clock{display:flex;flex-direction:column;align-items:center;line-height:23px;margin-left:15px;width:77px}
```
FILE: script.js
```js
const colName = n => n < 26 ? String.fromCharCode(65 + n) : 'A' + String.fromCharCode(39 + n);
const cols = document.getElementById('cols');
for (let i = 0; i < 34; i++) {
  const s = document.createElement('span');
  s.textContent = colName(i);
  cols.append(s);
}
const rows = document.getElementById('rows');
for (let i = 1; i <= 42; i++) {
  const s = document.createElement('span');
  s.textContent = i;
  rows.append(s);
}

// Lines and block arrows of the drawing, in window coordinates
const vLines = [474.5, 668.5, 883.5, 1061.5, 1241.5, 1447.5, 1647.5];
let g = '';
for (let r = 1; r <= 41; r++) g += `<path d="M1867 ${266.5 + 17 * r}h27" stroke="#d4d4d4"/>`;
g += '<path d="M1873.5 267v707" stroke="#d4d4d4"/>';
vLines.forEach(x => g += `<path d="M${x} 338.500V974" stroke="#4472c4" stroke-width="1.200"/>`);
g += '<path d="M26 663.5h1868" stroke="#4472c4" stroke-width="1.200"/>';
g += '<path d="M254 980V430.500H241.500L266.500 405.500 291.500 430.500H279V980z" fill="#ffc000" stroke="#41619b"/>';
g += '<path d="M26 877.5h1868" stroke="#4472c4" stroke-width="1.200"/>';
g += '<path d="M328.500 288H1765.500V269.500L1803 306.500 1765.500 343.500V325H328.500z" fill="#ed7d31" stroke="#41619b"/>';
document.getElementById('lines').innerHTML = g;

// Boxes: class, x, y, width, height, lines of [text, width, class]
const shapes = [
  ['theme', 843, 290, 186, 34, [['RELEASE THEME:', 186, 'caps']]],
  ['theme', 1034, 290, 234, 34, [['Swifted Dropshipping', 234]]],
  ['sprint', 50, 498, 184, 34, [['Sprint / Iteration 1', 122], ['(05/07/2021 - 12/07/2021)', 183]]],
  ['version', 37, 539, 208, 27, [['Version 1.0', 73]]],
  ['story', 311, 451, 139, 49, [['US01:', 38], ['Registration', 80]]],
  ['story', 311, 516, 139, 43, [['US02:', 38], ['Login', 36]]],
  ['story done', 311, 576, 139, 47, [['US03:', 38], ['User Profile', 76]]],
  ['story', 502, 689, 139, 70, [['US04:', 38], ['Add Product', 81], ['(Vendor)', 54, 's']]],
  ['story', 502, 769, 139, 70, [['US05:', 38], ['Retrieve Product', 110], ['(Vendor)', 54, 's']]],
  ['story', 709, 689, 139, 70, [['US06:', 38], ['Update Product', 101], ['(Vendor)', 54, 's']]],
  ['story', 709, 769, 139, 70, [['US07:', 38], ['Delete Product', 96], ['(Vendor)', 54, 's']]],
  ['story', 502, 915, 139, 72, [['US08:', 38], ['Explore Website', 106], ['(Customer)', 67, 's']]],
  ['story', 708, 915, 139, 72, [['US10:', 38], ['Select Product', 93], ['(Customer)', 67, 's']]]
];
const epics = [
  [332, 313, 'User Profile', 70], [527, 507, 'Dashboard', 65], [722, 702, 'Product Details', 92],
  [927, 908, 'Cart', 25], [1095, 1075, 'Wishlist', 49], [1284, 1264, 'Become a Vendor', 103],
  [1499, 1479, 'Checkout', 55], [1671, 1652, 'Product Review', 94]
];
epics.forEach(([x1, x2, t, w], i) => {
  shapes.push(['epic', x1, 353, 98, 27, [['Epic ' + (i + 1), 35]]]);
  shapes.push(['epic', x2, 379, 137, 27, [[t, w]]]);
});
const canvas = document.getElementById('canvas');
shapes.forEach(([cls, x, y, w, h, lines]) => {
  const d = document.createElement('div');
  d.className = 'shape ' + cls;
  d.style.cssText = `left:${x - 26}px;top:${y - 267}px;width:${w}px;height:${h}px`;
  lines.forEach(([t, tw, c]) => {
    const s = document.createElement('span');
    s.textContent = t;
    s.dataset.w = tw;
    if (c) s.className = c;
    d.append(s);
  });
  canvas.append(d);
});

// Track each label so that it takes its nominal width
document.querySelectorAll('[data-w]').forEach(el => {
  const n = el.textContent.length;
  const diff = el.dataset.w - el.getBoundingClientRect().width;
  el.style.letterSpacing = diff / n + 'px';
});
```
